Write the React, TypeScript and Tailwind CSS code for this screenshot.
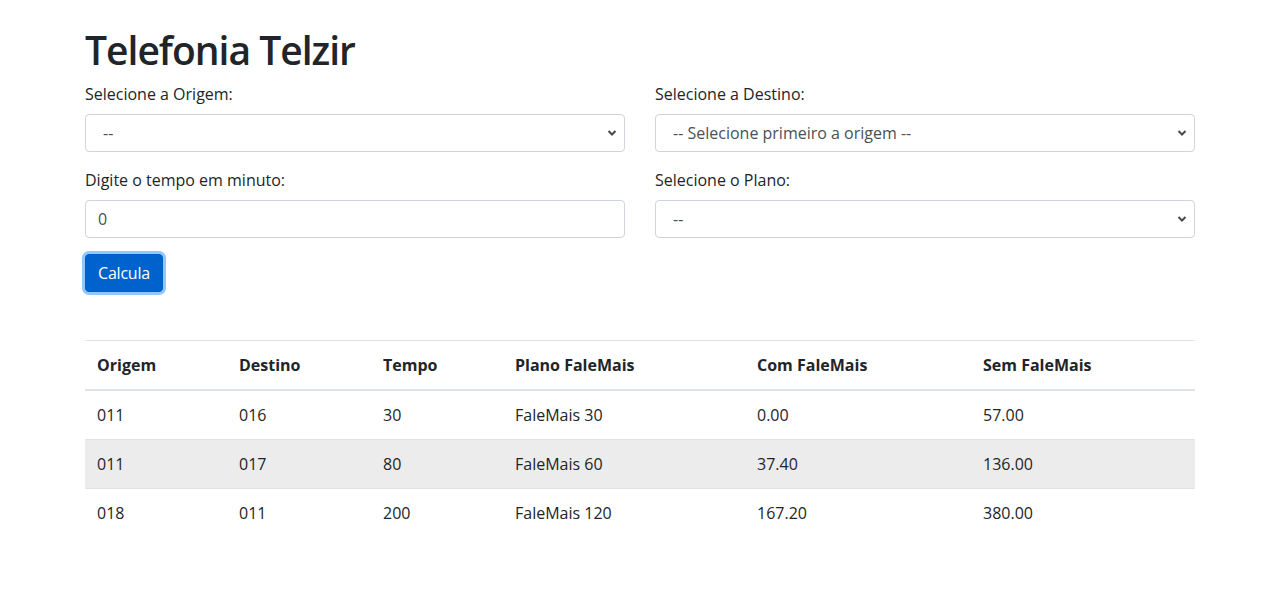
import React from 'react';

const rows = [
  { origem: '011', destino: '016', tempo: '30', plano: 'FaleMais 30', com: '0.00', sem: '57.00' },
  { origem: '011', destino: '017', tempo: '80', plano: 'FaleMais 60', com: '37.40', sem: '136.00' },
  { origem: '018', destino: '011', tempo: '200', plano: 'FaleMais 120', com: '167.20', sem: '380.00' },
];

const Chevron = () => (
  <svg
    className="pointer-events-none absolute right-[8px] top-1/2 -translate-y-1/2"
    width="10"
    height="7"
    viewBox="0 0 10 7"
  >
    <path d="M1.5 1.5 L5 5 L8.5 1.5" fill="none" stroke="#4a4a4a" strokeWidth="2" />
  </svg>
);

const Select = ({ value }: { value: string }) => (
  <div className="relative">
    <select className="w-full h-[38px] appearance-none rounded border border-[#ced4da] bg-white pl-[17px] pr-8 text-[16px] text-[#495057] outline-none">
      <option>{value}</option>
    </select>
    <Chevron />
  </div>
);

const Label = ({ children }: { children: React.ReactNode }) => (
  <label className="mb-2 block text-[16px] leading-6 text-[#212529]">{children}</label>
);

const App = () => {
  return (
    <div className="min-h-[616px] bg-white font-['Open_Sans',sans-serif] text-[#212529]">
      <div className="mx-auto w-[1140px] px-[15px] pt-[26px]">
        <h1 className="mb-2 text-[39px] font-semibold leading-[48px] tracking-[-1px]">Telefonia Telzir</h1>

        <form>
          <div className="grid grid-cols-2 gap-x-[30px]">
            <div className="mb-4">
              <Label>Selecione a Origem:</Label>
              <Select value="--" />
            </div>
            <div className="mb-4">
              <Label>Selecione a Destino:</Label>
              <Select value="-- Selecione primeiro a origem --" />
            </div>
            <div className="mb-4">
              <Label>Digite o tempo em minuto:</Label>
              <input
                defaultValue="0"
                className="block w-full h-[38px] rounded border border-[#ced4da] bg-white px-3 text-[16px] text-[#495057] outline-none"
              />
            </div>
            <div className="mb-4">
              <Label>Selecione o Plano:</Label>
              <Select value="--" />
            </div>
          </div>
          <button
            type="button"
            className="h-[38px] rounded border border-[#005cbf] bg-[#0062cc] px-3 text-[16px] leading-6 tracking-[-0.2px] text-white shadow-[0_0_0_3px_rgba(38,143,255,0.5)]"
          >
            Calcula
          </button>
        </form>

        <table className="mt-12 w-full border-collapse text-left text-[16px] leading-6">
          <thead>
            <tr className="border-t border-[#dee2e6]">
              <th className="w-[142px] border-b-2 border-[#dee2e6] p-3 font-bold">Origem</th>
              <th className="w-[144px] border-b-2 border-[#dee2e6] p-3 font-bold">Destino</th>
              <th className="w-[132px] border-b-2 border-[#dee2e6] p-3 font-bold">Tempo</th>
              <th className="w-[242px] border-b-2 border-[#dee2e6] p-3 font-bold">Plano FaleMais</th>
              <th className="w-[226px] border-b-2 border-[#dee2e6] p-3 font-bold">Com FaleMais</th>
              <th className="border-b-2 border-[#dee2e6] p-3 font-bold">Sem FaleMais</th>
            </tr>
          </thead>
          <tbody>
            {rows.map((r, i) => (
              <tr key={i} className={`${i > 0 ? 'border-t border-[#dee2e6]' : ''} ${i === 1 ? 'bg-[#ececec]' : ''}`}>
                <td className="p-3">{r.origem}</td>
                <td className="p-3">{r.destino}</td>
                <td className="p-3">{r.tempo}</td>
                <td className="p-3">{r.plano}</td>
                <td className="p-3">{r.com}</td>
                <td className="p-3">{r.sem}</td>
              </tr>
            ))}
          </tbody>
        </table>
      </div>
    </div>
  );
};

export default App;
